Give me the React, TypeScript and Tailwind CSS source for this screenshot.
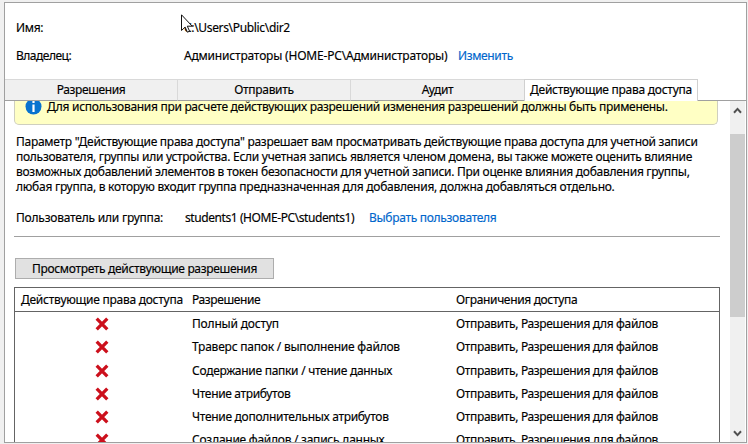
import React from "react";

const limits = "Отправить, Разрешения для файлов";

const rows = [
  { name: "Полный доступ", box: "h-[23px]", spacing: "tracking-[-0.18px]" },
  { name: "Траверс папок / выполнение файлов", box: "h-[24px]", spacing: "tracking-[-0.22px]" },
  { name: "Содержание папки / чтение данных", box: "h-[23px]", spacing: "tracking-[-0.28px]" },
  { name: "Чтение атрибутов", box: "h-[23px]", spacing: "tracking-[-0.34px]" },
  { name: "Чтение дополнительных атрибутов", box: "h-[23px]", spacing: "tracking-[-0.3px]" },
  { name: "Создание файлов / запись данных", box: "h-[23px]", spacing: "tracking-[-0.26px]" },
];

function Denied() {
  return (
    <svg width="14" height="14" viewBox="0 0 14 14" fill="none">
      <path d="M1.7 1.7 12.3 12.3M12.3 1.7 1.7 12.3" stroke="#cc101c" strokeWidth="3.3" />
    </svg>
  );
}

function Cursor() {
  return (
    <svg className="absolute left-[181px] top-[14px]" width="13" height="20" viewBox="0 0 13 20">
      <path d="M.5.8v15.7l3.6-3.4 2.3 5.1 2.2-1-2.3-5h4.9z" fill="#fff" stroke="#111" strokeWidth="1" />
    </svg>
  );
}

function Arrow({ up }: { up?: boolean }) {
  return (
    <svg width="9" height="7" viewBox="0 0 9 7" fill="none">
      <path d={up ? "M1 5.7 4.5 1.9 8 5.7" : "M1 1.3 4.5 5.1 8 1.3"} stroke="#505050" strokeWidth="2" />
    </svg>
  );
}

export default function App() {
  return (
    <div className="relative h-[444px] w-[748px] overflow-hidden bg-[#f0f0f0] pl-1 pt-[2px] font-['Noto_Sans','Open_Sans',sans-serif] text-[12px] leading-[15px] tracking-[-0.3px] whitespace-nowrap text-black [-webkit-text-stroke:0.15px]">
      <div className="flex h-[441px] w-[743px] flex-col border border-[#a0a0a0] bg-white">
        <header className="flex h-[76px] flex-col gap-[13px] pl-[11px] pt-[17px]">
          <div className="flex h-[15px]">
            <span className="w-[168px]">Имя:</span>
            <span className="tracking-[-0.33px]">C:\Users\Public\dir2</span>
          </div>
          <div className="flex h-[15px]">
            <span className="w-[168px] tracking-[-0.5px]">Владелец:</span>
            <span className="w-[274px] tracking-[-0.19px]">Администраторы (HOME-PC\Администраторы)</span>
            <a className="tracking-[-0.35px] text-[#0066cc]">Изменить</a>
          </div>
        </header>
        <nav className="flex h-[22px] text-center leading-[20px]">
          <div className="w-[173px] border-t border-r border-b border-t-[#d9d9d9] border-r-[#d9d9d9] border-b-[#a0a0a0] bg-[#f0f0f0] tracking-[-0.38px]">Разрешения</div>
          <div className="w-[173px] border-t border-r border-b border-t-[#d9d9d9] border-r-[#d9d9d9] border-b-[#a0a0a0] bg-[#f0f0f0]">Отправить</div>
          <div className="w-[173px] border-t border-b border-t-[#d9d9d9] border-b-[#a0a0a0] bg-[#f0f0f0]">Аудит</div>
          <div className="w-[174px] border-t border-r border-l border-[#d0d0d0] bg-white tracking-[-0.26px]">Действующие права доступа</div>
          <div className="flex-1 border-b border-[#a0a0a0]" />
        </nav>
        <div className="flex h-[341px]">
          <main className="h-[341px] w-[725px] overflow-hidden pl-[9px]">
            <div className="flex h-[24px] w-[704px] rounded-b-[5px] border border-t-0 border-[#cfcfbf] bg-[#ffffc4] pl-[10px]">
              <svg width="17" height="17" viewBox="0 0 17 17" className="-mt-[3px]">
                <circle cx="8.5" cy="8.5" r="8" fill="#0873cf" />
                <path d="M7.4 3h2.2v2H7.4zM7.4 6.5h2.2V14H7.4z" fill="#fff" />
              </svg>
              <span className="-mt-[2px] ml-[5px]">Для использования при расчете действующих разрешений изменения разрешений должны быть применены.</span>
            </div>
            <p className="mt-[9px] ml-[2px] tracking-[-0.275px]">
              Параметр "Действующие права доступа" разрешает вам просматривать действующие права доступа для учетной записи<br />
              пользователя, группы или устройства. Если учетная запись является членом домена, вы также можете оценить влияние<br />
              возможных добавлений элементов в токен безопасности для учетной записи. При оценке влияния добавления группы,<br />
              <span className="tracking-[-0.26px]">любая группа, в которую входит группа предназначенная для добавления, должна добавляться отдельно.</span>
            </p>
            <div className="mt-[16px] ml-[2px] flex h-[15px]">
              <span className="w-[169px] tracking-[-0.22px]">Пользователь или группа:</span>
              <span className="w-[184px] tracking-[-0.42px]">students1 (HOME-PC\students1)</span>
              <a className="text-[#0066cc]">Выбрать пользователя</a>
            </div>
            <div className="mt-[11px] h-px w-[706px] bg-[#a0a0a0]" />
            <button className="mt-[21px] ml-px block h-[21px] w-[259px] border border-[#adadad] bg-[#e1e1e1] leading-[19px] tracking-[-0.32px]">Просмотреть действующие разрешения</button>
            <div className="mt-[8px] h-[180px] w-[706px] border border-[#646464]">
              <div className="flex h-[24px] border-b border-[#646464] leading-[24px]">
                <span className="w-[171px] pl-[6px] tracking-[-0.26px]">Действующие права доступа</span>
                <span className="w-[264px] pl-[6px] tracking-[-0.4px]">Разрешение</span>
                <span className="pl-[6px] tracking-[-0.34px]">Ограничения доступа</span>
              </div>
              {rows.map((row) => (
                <div key={row.name} className={`flex leading-[24px] ${row.box}`}>
                  <span className="flex w-[171px] items-center justify-center pl-[3px]"><Denied /></span>
                  <span className={`w-[264px] pl-[6px] ${row.spacing}`}>{row.name}</span>
                  <span className="pl-[6px] tracking-[-0.34px]">{limits}</span>
                </div>
              ))}
            </div>
          </main>
          <aside className="flex w-[15px] flex-col items-center bg-[#f0f0f0]">
            <div className="flex h-[33px] items-center pb-[15px]"><Arrow up /></div>
            <div className="h-[183px] w-full bg-[#cdcdcd]" />
            <div className="flex flex-1 items-end pb-[5px]"><Arrow /></div>
          </aside>
        </div>
      </div>
      <Cursor />
    </div>
  );
}
